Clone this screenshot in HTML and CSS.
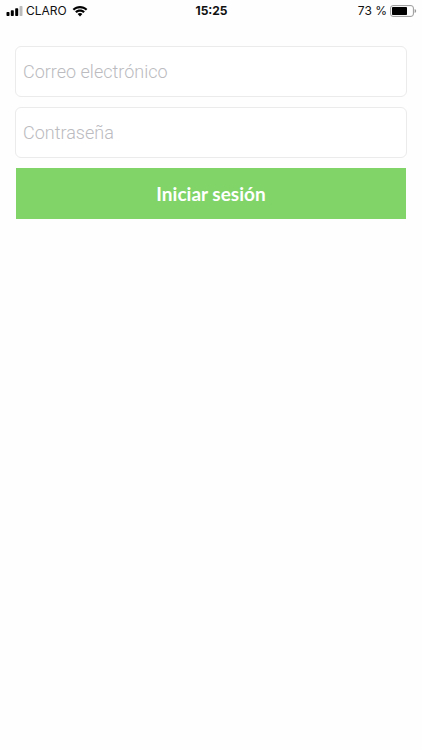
FILE: index.html
```html
<!DOCTYPE html>
<html lang="es">
<head>
<meta charset="utf-8">
<meta name="viewport" content="width=device-width, initial-scale=1">
<title>Iniciar sesión</title>
<link rel="stylesheet" href="styles.css">
</head>
<body>
<header class="status">
  <div class="status-side">
    <svg class="signal" width="17" height="10" viewBox="0 0 17 10" aria-hidden="true">
      <rect x="0.5" y="6" width="3" height="4" rx="0.7"/>
      <rect x="4.8" y="4.3" width="3" height="5.7" rx="0.7"/>
      <rect x="9.2" y="2.3" width="3" height="7.7" rx="0.7"/>
      <rect class="dim" x="13.5" y="0" width="3" height="10" rx="0.7"/>
    </svg>
    <span class="carrier">CLARO</span>
    <svg class="wifi" width="16" height="12" viewBox="0 0 16 12" aria-hidden="true">
      <path d="M0.6 3.9C4.7-.1 11.3-.1 15.4 3.9L13.9 5.5C10.6 2.4 5.4 2.4 2.1 5.5Z"/>
      <path d="M3.1 6.5C5.8 3.9 10.2 3.9 12.9 6.5L11.3 8.1C9.5 6.3 6.5 6.3 4.7 8.1Z"/>
      <path d="M5.6 9C6.9 7.7 9.1 7.7 10.4 9L8 11.5Z"/>
    </svg>
  </div>
  <time class="clock">15:25</time>
  <div class="status-side status-end">
    <span>73 %</span>
    <svg class="battery" width="27" height="12" viewBox="0 0 27 12" aria-hidden="true">
      <rect class="case" x="0.6" y="0.6" width="22.8" height="10.8" rx="2.4"/>
      <rect x="2" y="2" width="15" height="8" rx="0.8"/>
      <path class="cap" d="M24.6 4Q26.2 4.5 26.2 6T24.6 8Z"/>
    </svg>
  </div>
</header>
<main>
  <form class="login">
    <input class="field" type="email" aria-label="Correo electrónico" placeholder="Correo electrónico">
    <input class="field" type="password" aria-label="Contraseña" placeholder="Contraseña">
    <button class="submit" type="submit">Iniciar sesión</button>
  </form>
</main>
</body>
</html>
```
FILE: styles.css
```css
* {
  box-sizing: border-box;
}

body {
  margin: 0;
  background: #fefefe;
  color: #111;
  font-family: Inter, "Liberation Sans", sans-serif;
}

.status {
  display: grid;
  grid-template-columns: 1fr auto 1fr;
  align-items: center;
  height: 22px;
  padding: 0 5px 0 6px;
  font-size: 12px;
  line-height: 16px;
}

.status-side {
  display: flex;
  align-items: center;
  gap: 3px;
}

.status-end {
  justify-content: flex-end;
}

.carrier {
  margin-right: 2px;
}

.clock {
  font-size: 12px;
  font-weight: 700;
}

.dim {
  fill: #bbb;
}

.case {
  fill: none;
  stroke: #999;
}

.cap {
  fill: #999;
}

.login {
  display: flex;
  flex-direction: column;
  gap: 10px;
  padding: 24px 15px;
}

.field {
  width: 100%;
  height: 51px;
  padding: 0 7px 1px;
  border: 1px solid #ebebeb;
  border-radius: 6px;
  background: #fff;
  color: #222;
  font-family: Roboto, "Liberation Sans", sans-serif;
  font-size: 18px;
  font-weight: 300;
}

.field::placeholder {
  color: #bbbbc0;
  opacity: 1;
}

.submit {
  height: 51px;
  margin: 0 1px;
  padding: 0 0 1px;
  border: 0;
  background: #80d468;
  color: #fff;
  font-family: Lato, "Open Sans", sans-serif;
  font-size: 19px;
  font-weight: 700;
}
```
